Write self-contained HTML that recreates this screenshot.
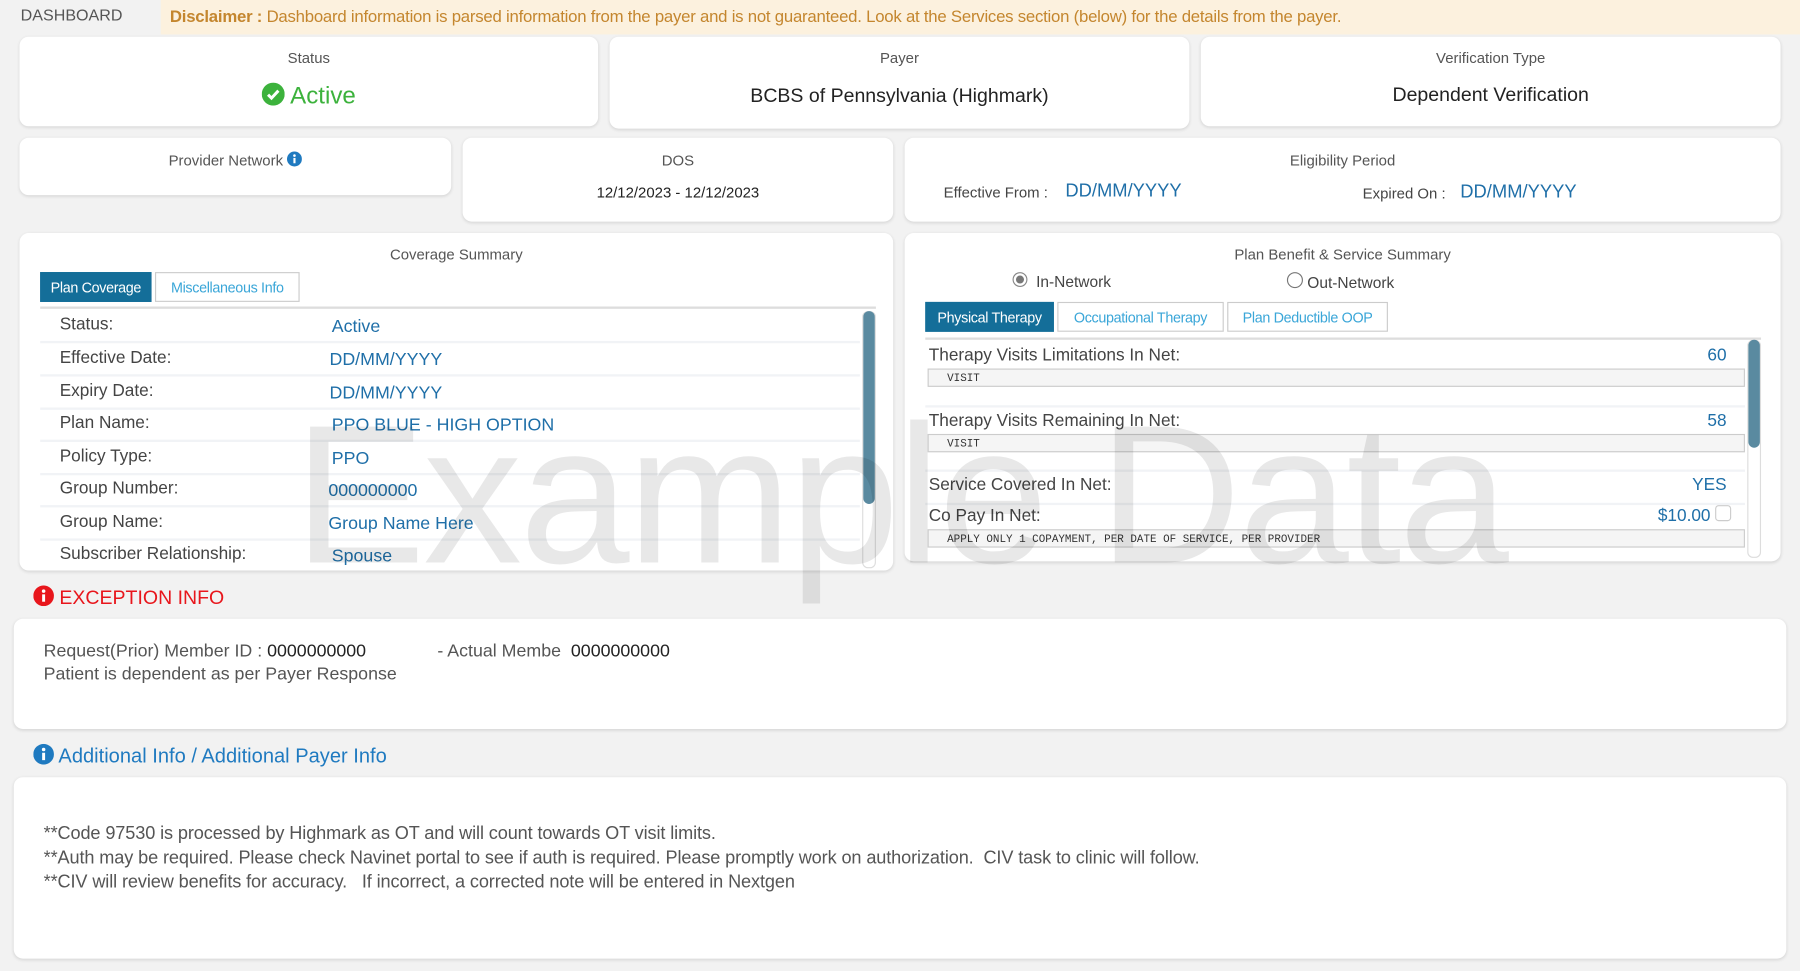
<!DOCTYPE html>
<html><head><meta charset="utf-8">
<style>
html,body{margin:0;padding:0;width:1800px;height:971px;overflow:hidden;background:#f2f2f2}
#w{position:absolute;left:0;top:0;width:1568px;height:846px;transform:scale(1.148);transform-origin:0 0;font-family:"Liberation Sans",sans-serif;color:#444}
.a{position:absolute}
.card{position:absolute;background:#fff;border-radius:8px;box-shadow:0 1px 3px rgba(0,0,0,.12)}
.t{position:absolute;left:0;right:0;text-align:center;font-size:13px;color:#555}
.blue{color:#1f6fa8}
.row{position:absolute;left:0;right:14px;height:28px;border-bottom:2px solid #f1f3f6}
.row .l{position:absolute;left:17px;top:5px;font-size:15px;color:#444}
.row .v{position:absolute;left:252px;top:7px;font-size:15.5px;color:#1f6fa8}
.tab{position:absolute;height:26px;line-height:26px;font-size:12.5px;padding:0;text-align:center;border:1px solid #ccc;color:#3aa6d8;background:#fff;box-sizing:border-box;white-space:nowrap;letter-spacing:-.3px}
.tab.on{background:#146e99;color:#fff;border-color:#146e99}
.pre{position:absolute;left:2px;right:14px;height:16px;background:#f5f5f5;border:1px solid #ccc;font-family:"Liberation Mono",monospace;font-size:9.5px;line-height:16px;padding-left:16px;color:#333;box-sizing:border-box}
.pl{position:absolute;left:3px;font-size:15px;color:#444}
.pv{position:absolute;right:30px;font-size:15px;color:#1f6fa8}
</style></head><body><div id="w">
<div class="a" style="left:18px;top:5px;font-size:14px;color:#555">DASHBOARD</div>
<div class="a" style="left:140px;top:0;width:1428px;height:30px;background:#fcf1de"></div>
<div class="a" style="left:148px;top:7px;font-size:14.6px;color:#c4862e;letter-spacing:-.2px;white-space:nowrap"><b>Disclaimer :</b> Dashboard information is parsed information from the payer and is not guaranteed. Look at the Services section (below) for the details from the payer.</div>

<div class="card" style="left:17px;top:32px;width:504px;height:78px">
<div class="t" style="top:11px">Status</div>
<div class="t" style="top:40px;font-size:21px;color:#3cb23c"><svg width="20" height="20" viewBox="0 0 20 20" style="vertical-align:-2px"><circle cx="10" cy="10" r="10" fill="#3cb23c"/><path d="M5.5 10.5l3 3 6-6.5" stroke="#fff" stroke-width="2.6" fill="none"/></svg> Active</div></div>
<div class="card" style="left:531px;top:32px;width:505px;height:80px">
<div class="t" style="top:11px">Payer</div>
<div class="t" style="top:42px;font-size:17px;color:#222">BCBS of Pennsylvania (Highmark)</div></div>
<div class="card" style="left:1046px;top:32px;width:505px;height:78px">
<div class="t" style="top:11px">Verification Type</div>
<div class="t" style="top:41px;font-size:17px;color:#222">Dependent Verification</div></div>

<div class="card" style="left:17px;top:120px;width:376px;height:50px">
<div class="t" style="top:12px">Provider Network <svg width="13" height="13" viewBox="0 0 14 14" style="vertical-align:-1px"><circle cx="7" cy="7" r="7" fill="#1f7ac0"/><rect x="6" y="6" width="2" height="5" fill="#fff"/><circle cx="7" cy="3.8" r="1.2" fill="#fff"/></svg></div></div>
<div class="card" style="left:403px;top:120px;width:375px;height:73px">
<div class="t" style="top:12px">DOS</div>
<div class="t" style="top:40px;color:#222">12/12/2023 - 12/12/2023</div></div>
<div class="card" style="left:788px;top:120px;width:763px;height:73px">
<div class="t" style="top:12px">Eligibility Period</div>
<div class="a" style="left:34px;top:40px;font-size:13px">Effective From :</div>
<div class="a blue" style="left:140px;top:38px;font-size:16px">DD/MM/YYYY</div>
<div class="a" style="left:399px;top:41px;font-size:13px">Expired On :</div>
<div class="a blue" style="left:484px;top:39px;font-size:16px">DD/MM/YYYY</div></div>

<div class="card" style="left:17px;top:203px;width:761px;height:294px;overflow:hidden">
<div class="t" style="top:11px">Coverage Summary</div>
<div class="tab on" style="left:18px;top:34px;width:97px">Plan Coverage</div>
<div class="tab" style="left:118px;top:34px;width:126px">Miscellaneous Info</div>
<div class="a" style="left:18px;top:64px;width:728px;height:230px;border-top:2px solid #ddd">
<div class="row" style="top:0"><span class="l">Status:</span><span class="v" style="left:254px">Active</span></div>
<div class="row" style="top:29px"><span class="l">Effective Date:</span><span class="v">DD/MM/YYYY</span></div>
<div class="row" style="top:58px"><span class="l">Expiry Date:</span><span class="v">DD/MM/YYYY</span></div>
<div class="row" style="top:86px"><span class="l">Plan Name:</span><span class="v" style="left:254px">PPO BLUE - HIGH OPTION</span></div>
<div class="row" style="top:115px"><span class="l">Policy Type:</span><span class="v" style="left:254px">PPO</span></div>
<div class="row" style="top:143px"><span class="l">Group Number:</span><span class="v" style="left:251px">000000000</span></div>
<div class="row" style="top:172px"><span class="l">Group Name:</span><span class="v" style="left:251px">Group Name Here</span></div>
<div class="row" style="top:200px;border:0"><span class="l">Subscriber Relationship:</span><span class="v" style="left:254px">Spouse</span></div>
<div class="a" style="right:0;top:2px;width:10px;height:222px;border-radius:5px;border:1px solid #ddd"></div>
<div class="a" style="right:1px;top:2px;width:10px;height:168px;border-radius:5px;background:#5a8aa0"></div>
</div></div>

<div class="card" style="left:788px;top:203px;width:763px;height:286px;overflow:hidden">
<div class="t" style="top:11px">Plan Benefit &amp; Service Summary</div>
<div class="a" style="left:94px;top:34px;font-size:13.5px"><span style="display:inline-block;width:11px;height:11px;border:1px solid #888;border-radius:50%;vertical-align:0;position:relative"><span style="position:absolute;left:2px;top:2px;width:7px;height:7px;border-radius:50%;background:#777"></span></span>&nbsp; In-Network</div>
<div class="a" style="left:333px;top:34px;font-size:13.5px"><span style="display:inline-block;width:12px;height:12px;border:1px solid #777;border-radius:50%;vertical-align:0"></span> Out-Network</div>
<div class="tab on" style="left:18px;top:60px;width:112px">Physical Therapy</div>
<div class="tab" style="left:133px;top:60px;width:145px">Occupational Therapy</div>
<div class="tab" style="left:281px;top:60px;width:140px">Plan Deductible OOP</div>
<div class="a" style="left:18px;top:91px;width:728px;height:195px;border-top:2px solid #ddd">
<div class="pl" style="top:5px">Therapy Visits Limitations In Net:</div><div class="pv" style="top:5px">60</div>
<div class="pre" style="top:25px">VISIT</div>
<div class="a" style="left:0;right:14px;top:57px;border-top:2px solid #f1f3f6"></div>
<div class="pl" style="top:62px">Therapy Visits Remaining In Net:</div><div class="pv" style="top:62px">58</div>
<div class="pre" style="top:82px">VISIT</div>
<div class="a" style="left:0;right:14px;top:113px;border-top:2px solid #f1f3f6"></div>
<div class="pl" style="top:118px">Service Covered In Net:</div><div class="pv" style="top:118px">YES</div>
<div class="a" style="left:0;right:14px;top:142px;border-top:2px solid #f1f3f6"></div>
<div class="pl" style="top:145px">Co Pay In Net:</div><div class="pv" style="top:145px;right:44px">$10.00</div>
<div class="a" style="right:26px;top:144px;width:12px;height:12px;border:1px solid #ccc;border-radius:3px"></div>
<div class="pre" style="top:165px">APPLY ONLY 1 COPAYMENT, PER DATE OF SERVICE, PER PROVIDER</div>
<div class="a" style="right:0;top:0;width:10px;height:188px;border-radius:5px;border:1px solid #ddd"></div>
<div class="a" style="right:1px;top:0;width:10px;height:94px;border-radius:5px;background:#5a8aa0"></div>
</div></div>

<div class="a" style="left:256px;top:345px;font-size:172px;color:rgba(0,0,0,.09);letter-spacing:-2px;white-space:nowrap;line-height:1">Example Data</div>

<div class="a" style="left:29px;top:510px;font-size:17px;color:#e8161c"><svg width="18" height="18" viewBox="0 0 14 14" style="vertical-align:-2px"><circle cx="7" cy="7" r="7" fill="#e8161c"/><rect x="6" y="6" width="2" height="5" fill="#fff"/><circle cx="7" cy="3.8" r="1.2" fill="#fff"/></svg> EXCEPTION INFO</div>
<div class="card" style="left:12px;top:539px;width:1544px;height:96px">
<div class="a" style="left:26px;top:20px;font-size:15.5px;color:#555;white-space:nowrap">Request(Prior) Member ID : <span style="color:#222">0000000000</span></div>
<div class="a" style="left:369px;top:20px;font-size:15.5px;color:#555;white-space:nowrap">- Actual Membe &nbsp;<span style="color:#222">0000000000</span></div>
<div class="a" style="left:26px;top:40px;font-size:15.5px;color:#555">Patient is dependent as per Payer Response</div></div>

<div class="a" style="left:29px;top:648px;font-size:17.5px;color:#1f7ac0"><svg width="18" height="18" viewBox="0 0 14 14" style="vertical-align:-2px"><circle cx="7" cy="7" r="7" fill="#1f7ac0"/><rect x="6" y="6" width="2" height="5" fill="#fff"/><circle cx="7" cy="3.8" r="1.2" fill="#fff"/></svg> Additional Info / Additional Payer Info</div>
<div class="card" style="left:12px;top:677px;width:1544px;height:158px">
<div class="a" style="left:26px;top:39px;font-size:15.8px;color:#555;line-height:21px;white-space:nowrap;letter-spacing:-.1px">**Code 97530 is processed by Highmark as OT and will count towards OT visit limits.<br>**Auth may be required. Please check Navinet portal to see if auth is required. Please promptly work on authorization.&nbsp; CIV task to clinic will follow.<br>**CIV will review benefits for accuracy.&nbsp;&nbsp; If incorrect, a corrected note will be entered in Nextgen</div></div>
</div></body></html>
